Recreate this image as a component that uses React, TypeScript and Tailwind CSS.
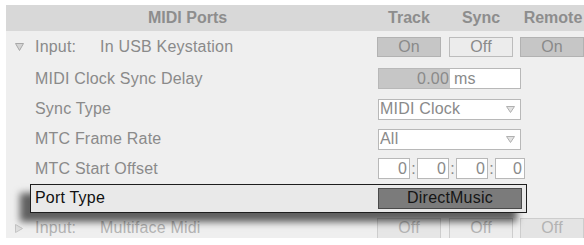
import React from "react";

const font = { fontFamily: '"Liberation Sans", Arial, sans-serif' };

function TriDown() {
  return (
    <svg width="9" height="8" viewBox="0 0 9 8" className="block">
      <polygon points="0.5,0.5 8.5,0.5 4.5,7.5" fill="#d4d4d4" stroke="#a8a8a8" strokeWidth="1" />
    </svg>
  );
}

function TriRight() {
  return (
    <svg width="8" height="9" viewBox="0 0 8 9" className="block">
      <polygon points="0.5,0.5 7.5,4.5 0.5,8.5" fill="#dedede" stroke="#c4c4c4" strokeWidth="1" />
    </svg>
  );
}

function DropArrow() {
  return (
    <svg width="9" height="7" viewBox="0 0 9 7" className="block">
      <polygon points="0.5,0.5 8.5,0.5 4.5,6.5" fill="#e2e2e2" stroke="#b0b0b0" strokeWidth="1" />
    </svg>
  );
}

export default function App() {
  return (
    <div className="w-[584px] h-[245px] bg-white pt-[5px] pl-[6px] text-[16px] tracking-[0.2px]" style={font}>
      <div className="w-[578px] h-[233px] bg-[#efefef] overflow-hidden flex flex-col">
        {/* header */}
        <div className="flex h-[26px] shrink-0 bg-[#d8d8d8] items-center font-bold text-[#8d8d8d] leading-none tracking-normal">
          <div className="w-[371px] pl-[142px]">MIDI Ports</div>
          <div className="w-[64px] text-center">Track</div>
          <div className="w-[8px]" />
          <div className="w-[64px] text-center">Sync</div>
          <div className="w-[7px]" />
          <div className="w-[64px] text-center pl-[2px]">Remote</div>
        </div>

        {/* Input row */}
        <div className="flex h-[32px] shrink-0 items-center text-[#8a8a8a] leading-none">
          <div className="w-[371px] flex items-center">
            <div className="w-[29px] pl-[9px]">
              <TriDown />
            </div>
            <span className="w-[65px]">Input:</span>
            <span>In USB Keystation</span>
          </div>
          <div className="w-[64px] h-[20px] bg-[#c6c6c6] border border-[#b2b2b2] flex items-center justify-center">On</div>
          <div className="w-[8px]" />
          <div className="w-[64px] h-[20px] bg-[#ececec] border border-[#bcbcbc] flex items-center justify-center">Off</div>
          <div className="w-[7px]" />
          <div className="w-[64px] h-[20px] bg-[#c6c6c6] border border-[#b2b2b2] flex items-center justify-center">On</div>
        </div>

        {/* MIDI Clock Sync Delay */}
        <div className="flex h-[31px] shrink-0 items-center text-[#8a8a8a] leading-none">
          <div className="w-[372px] pl-[29px]">MIDI Clock Sync Delay</div>
          <div className="w-[143px] h-[21px] border border-[#b8b8b8] bg-white flex">
            <div className="w-[71px] h-full bg-[#c6c6c6] flex items-center justify-end pr-[1px]">0.00</div>
            <div className="flex items-center pl-[4px]">ms</div>
          </div>
        </div>

        {/* Sync Type */}
        <div className="flex h-[30px] shrink-0 items-center text-[#8a8a8a] leading-none">
          <div className="w-[372px] pl-[29px]">Sync Type</div>
          <div className="w-[143px] h-[21px] border border-[#b8b8b8] bg-white flex items-center justify-between pl-[1px] pr-[5px]">
            <span>MIDI Clock</span>
            <DropArrow />
          </div>
        </div>

        {/* MTC Frame Rate */}
        <div className="flex h-[30px] shrink-0 items-center text-[#8a8a8a] leading-none">
          <div className="w-[372px] pl-[29px]">MTC Frame Rate</div>
          <div className="w-[143px] h-[21px] border border-[#b8b8b8] bg-white flex items-center justify-between pl-[1px] pr-[5px]">
            <span>All</span>
            <DropArrow />
          </div>
        </div>

        {/* MTC Start Offset */}
        <div className="flex h-[29px] shrink-0 items-center text-[#8a8a8a] leading-none">
          <div className="w-[372px] pl-[29px]">MTC Start Offset</div>
          <div className="flex items-center">
            <div className="w-[32px] h-[21px] border border-[#b8b8b8] bg-white flex items-center justify-end pr-[2px]">0</div>
            <span className="w-[7px] text-center">:</span>
            <div className="w-[32px] h-[21px] border border-[#b8b8b8] bg-white flex items-center justify-end pr-[2px]">0</div>
            <span className="w-[7px] text-center">:</span>
            <div className="w-[32px] h-[21px] border border-[#b8b8b8] bg-white flex items-center justify-end pr-[2px]">0</div>
            <span className="w-[7px] text-center">:</span>
            <div className="w-[30px] h-[21px] border border-[#b8b8b8] bg-white flex items-center justify-end pr-[2px]">0</div>
          </div>
        </div>

        {/* Port Type (highlighted) */}
        <div className="flex h-[30px] shrink-0 items-center pl-[24px] relative z-10 leading-none">
          <div className="w-[497px] h-[29px] border border-[#1e1e1e] bg-[#e9e9e9] flex items-center shadow-[-10px_9px_7px_rgba(0,0,0,0.6)]">
            <div className="w-[347px] pl-[4px] text-[#111111]">Port Type</div>
            <div className="w-[144px] h-[21px] bg-[#7b7b7b] border border-[#4a4a4a] flex items-center justify-center text-[#151515]">
              DirectMusic
            </div>
          </div>
        </div>

        {/* Input Multiface */}
        <div className="flex h-[30px] shrink-0 items-center text-[#b3b3b3] leading-none">
          <div className="w-[371px] flex items-center">
            <div className="w-[29px] pl-[9px]">
              <TriRight />
            </div>
            <span className="w-[65px]">Input:</span>
            <span>Multiface Midi</span>
          </div>
          <div className="w-[64px] h-[21px] bg-[#e6e6e6] border border-[#cdcdcd] flex items-center justify-center">Off</div>
          <div className="w-[8px]" />
          <div className="w-[64px] h-[21px] bg-[#ececec] border border-[#cdcdcd] flex items-center justify-center">Off</div>
          <div className="w-[7px]" />
          <div className="w-[64px] h-[21px] bg-[#e4e4e4] border border-[#cdcdcd] flex items-center justify-center">Off</div>
        </div>
      </div>
    </div>
  );
}
